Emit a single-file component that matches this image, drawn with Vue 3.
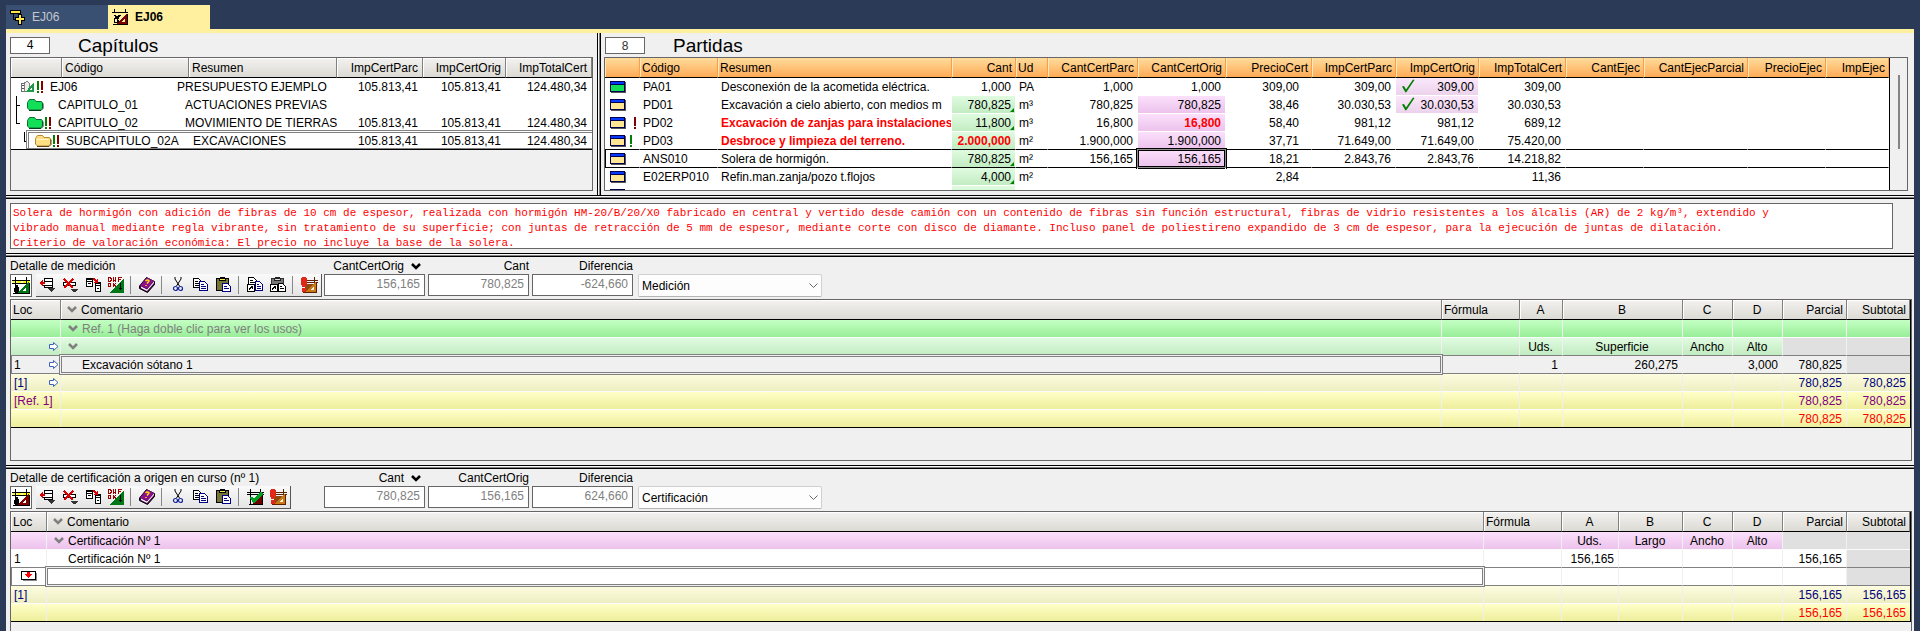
<script setup>
import { ref } from 'vue'

const chapters = [
  { code: 'EJ06', text: 'PRESUPUESTO EJEMPLO', icon: 'budget', marks: true, depth: 0, v: ['105.813,41', '105.813,41', '124.480,34'] },
  { code: 'CAPITULO_01', text: 'ACTUACIONES PREVIAS', icon: 'folder-green', depth: 1, v: ['', '', ''] },
  { code: 'CAPITULO_02', text: 'MOVIMIENTO DE TIERRAS', icon: 'folder-green', marks: true, depth: 1, v: ['105.813,41', '105.813,41', '124.480,34'] },
  { code: 'SUBCAPITULO_02A', text: 'EXCAVACIONES', icon: 'folder-yellow', marks: true, depth: 2, v: ['105.813,41', '105.813,41', '124.480,34'] },
]

const itemHeads = ['Cant', 'Ud', 'CantCertParc', 'CantCertOrig', 'PrecioCert', 'ImpCertParc', 'ImpCertOrig', 'ImpTotalCert', 'CantEjec', 'CantEjecParcial', 'PrecioEjec', 'ImpEjec']

const items = [
  { icon: 'item-green', code: 'PA01', text: 'Desconexión de la acometida eléctrica.', cant: '1,000', ud: 'PA', ccp: '1,000', cco: '1,000', price: '309,00', icp: '309,00', ico: '309,00', check: true, itc: '309,00' },
  { icon: 'item-yellow', code: 'PD01', text: 'Excavación a cielo abierto, con medios m', cant: '780,825', calc: true, ud: 'm³', ccp: '780,825', cco: '780,825', pink: true, price: '38,46', icp: '30.030,53', ico: '30.030,53', check: true, itc: '30.030,53' },
  { icon: 'item-yellow', mark: 'red', code: 'PD02', text: 'Excavación de zanjas para instalaciones', alert: true, cant: '11,800', calc: true, ud: 'm³', ccp: '16,800', cco: '16,800', ccoAlert: true, pink: true, price: '58,40', icp: '981,12', ico: '981,12', itc: '689,12' },
  { icon: 'item-yellow', mark: 'green', code: 'PD03', text: 'Desbroce y limpieza del terreno.', alert: true, cant: '2.000,000', green: true, cantAlert: true, ud: 'm²', ccp: '1.900,000', cco: '1.900,000', pink: true, price: '37,71', icp: '71.649,00', ico: '71.649,00', itc: '75.420,00' },
  { icon: 'item-yellow', code: 'ANS010', text: 'Solera de hormigón.', current: true, cant: '780,825', calc: true, ud: 'm²', ccp: '156,165', cco: '156,165', pink: true, price: '18,21', icp: '2.843,76', ico: '2.843,76', itc: '14.218,82' },
  { icon: 'item-yellow', code: 'E02ERP010', text: 'Refin.man.zanja/pozo t.flojos', cant: '4,000', calc: true, ud: 'm²', ccp: '', cco: '', price: '2,84', icp: '', ico: '', itc: '11,36' },
  { icon: 'item-yellow', code: '', text: '', cant: '', calc: true, ud: '', ccp: '', cco: '', price: '', icp: '', ico: '', itc: '' },
]

const description = ref(
  [
    'Solera de hormigón con adición de fibras de 10 cm de espesor, realizada con hormigón HM-20/B/20/X0 fabricado en central y vertido desde camión con un contenido de fibras sin función estructural, fibras de vidrio resistentes a los álcalis (AR) de 2 kg/m³, extendido y',
    'vibrado manual mediante regla vibrante, sin tratamiento de su superficie; con juntas de retracción de 5 mm de espesor, mediante corte con disco de diamante. Incluso panel de poliestireno expandido de 3 cm de espesor, para la ejecución de juntas de dilatación.',
    'Criterio de valoración económica: El precio no incluye la base de la solera.',
  ].join('\n')
)

const baseTools = [
  ['insert-row', 'Insertar línea'], ['delete-row', 'Eliminar línea'], ['transfer', 'Transferir líneas'], ['dwg', 'DWG/DXF'], null,
  ['book', 'Ayuda'], null,
  ['cut', 'Cortar'], ['copy', 'Copiar'], ['paste', 'Pegar'], null,
]

const details = [
  {
    id: 'med', title: 'Detalle de medición', mode: 'Medición', tone: 'green',
    tools: [...baseTools, ['copy-link', 'Copiar referencia'], ['paste-link', 'Pegar referencia'], null, ['measure-alert', 'Comprobar medición']],
    fields: [['CantCertOrig', '156,165'], ['Cant', '780,825'], ['Diferencia', '-624,660']],
    rows: [
      { kind: 'title', chev: true, text: 'Ref. 1 (Haga doble clic para ver los usos)', c: ['', '', '', '', '', '', ''] },
      { kind: 'labels', arrow: true, chev: true, text: '', c: ['', 'Uds.', 'Superficie', 'Ancho', 'Alto', '', ''] },
      { kind: 'current', loc: '1', arrow: true, text: 'Excavación sótano 1', c: ['', '1', '260,275', '', '3,000', '780,825', ''] },
      { kind: 'sum navy', loc: '[1]', arrow: true, text: '', c: ['', '', '', '', '', '780,825', '780,825'] },
      { kind: 'total purple', loc: '[Ref. 1]', text: '', c: ['', '', '', '', '', '780,825', '780,825'] },
      { kind: 'total red', text: '', c: ['', '', '', '', '', '780,825', '780,825'] },
    ],
  },
  {
    id: 'cert', title: 'Detalle de certificación a origen en curso (nº 1)', mode: 'Certificación', tone: 'pink',
    tools: [...baseTools, ['measure-ok', 'Certificar'], ['measure-alert', 'Comprobar certificación']],
    fields: [['Cant', '780,825'], ['CantCertOrig', '156,165'], ['Diferencia', '624,660']],
    rows: [
      { kind: 'labels', chev: true, text: 'Certificación Nº 1', c: ['', 'Uds.', 'Largo', 'Ancho', 'Alto', '', ''] },
      { kind: 'line', loc: '1', text: 'Certificación Nº 1', c: ['', '156,165', '', '', '', '156,165', ''] },
      { kind: 'current blank', entry: true, text: '', c: ['', '', '', '', '', '', ''] },
      { kind: 'sum navy', loc: '[1]', text: '', c: ['', '', '', '', '', '156,165', '156,165'] },
      { kind: 'total red', text: '', c: ['', '', '', '', '', '156,165', '156,165'] },
    ],
  },
]
</script>

<template>
  <div class="app">
    <svg class="defs" aria-hidden="true">
      <defs>
        <symbol id="measure" viewBox="0 0 18 17" shape-rendering="crispEdges">
          <path d="M0 3h18v1h-18zM0 6h18v1h-18z" fill="#000" />
          <path d="M1 4h2v2h-2zM5 4h4v2h-4zM11 4h3v2h-3zM15 4h3v2h-3z" fill="#ff0" />
          <path d="M3 0h1v17h-1zM14 0h1v7h-1z" fill="#000" />
          <path d="M17 5v11h-12z" fill="currentColor" />
          <path d="M14 11v3h-4z" fill="#fff" />
          <path d="M1 16h17v1h-17zM17 7h1v9h-1z" fill="#000" />
          <path d="M4 8h2v2h1v5h-1v1h-3v-1h-1v-4h2z" fill="#000" />
        </symbol>
        <symbol id="measure-tab" viewBox="0 0 16 16" shape-rendering="crispEdges">
          <path d="M0 3h16v1h-16zM2 0h1v4h-1zM13 0h1v4h-1z" fill="#000" />
          <path d="M15 4v11h-11z" fill="#800000" />
          <path d="M1 15h15v1h-15zM15 5h1v10h-1z" fill="#000" />
          <path d="M13 9v4h-4z" fill="#fff0a0" />
          <path d="M2 6h2v1h2v-1h3v1h-1v1h-1v2h-1v1h1v3h-5v-5h1v-2h-1z" fill="#000" />
          <path d="M3 10h2v3h-2z" fill="#fff0a0" />
        </symbol>
        <symbol id="plus-tab" viewBox="0 0 15 15" shape-rendering="crispEdges">
          <path d="M0 0h11v4h-11z" fill="#000" /><path d="M1 1h9v2h-9z" fill="#ffe84a" />
          <path d="M3 4h1v5h2v1h-3z" fill="#000" />
          <path d="M8 4h4v3h3v4h-3v4h-4v-4h-3v-4h3z" fill="#000" />
          <path d="M9 5h2v3h3v2h-3v4h-2v-4h-3v-2h3z" fill="#ffe84a" />
        </symbol>
        <symbol id="budget" viewBox="0 0 17 13" shape-rendering="crispEdges">
          <path d="M1.500 2.500h6v9h-6z" fill="#fff" stroke="#666" />
          <path d="M2 4h3v1h-3zM2 6h3v1h-3zM2 8h3v1h-3z" fill="#555" />
          <path d="M5.500 1.500l3 -1 2 2v9h-5z" fill="#eee" stroke="#777" />
          <path d="M16 1v11h-10z" fill="#1f9a48" /><path d="M13 7v3h-3z" fill="#fff" />
        </symbol>
        <symbol id="folder-green" viewBox="0 0 17 12">
          <path d="M.5 3.500l2-3h5l1.500 2h5.500l1 1.500v5l-2 2h-11l-2-2z" fill="#12df57" stroke="#087034" />
          <path d="M2 11.500h12l2-2v-5" fill="none" stroke="#044020" />
        </symbol>
        <symbol id="folder-yellow" viewBox="0 0 17 12">
          <path d="M.5 3.500l2-3h5l1.500 2h5.500l1 1.500v5l-2 2h-11l-2-2z" fill="#ffdf83" stroke="#b8862c" />
          <path d="M2 4.500h11" stroke="#fff3c4" /><path d="M2 11.500h12l2-2v-5" fill="none" stroke="#5d3e0c" />
        </symbol>
        <symbol id="marks" viewBox="0 0 7 12" shape-rendering="crispEdges">
          <path d="M0 0h2v9h-2zM0 10h2v2h-2z" fill="#007f00" /><path d="M4 0h2v9h-2zM4 10h2v2h-2z" fill="#800000" />
        </symbol>
        <symbol id="mark" viewBox="0 0 2 12" shape-rendering="crispEdges"><path d="M0 0h2v9h-2zM0 10h2v2h-2z" fill="currentColor" /></symbol>
        <symbol id="item-green" viewBox="0 0 16 12" shape-rendering="crispEdges">
          <path d="M1 1h15v11h-15z" fill="#555" /><path d="M0 0h15v11h-15z" fill="#000050" /><path d="M1 1h13v2h-13z" fill="#0838ff" /><path d="M1 4h13v6h-13z" fill="#12df57" />
        </symbol>
        <symbol id="item-yellow" viewBox="0 0 16 12" shape-rendering="crispEdges">
          <path d="M1 1h15v11h-15z" fill="#555" /><path d="M0 0h15v11h-15z" fill="#000050" /><path d="M1 1h13v2h-13z" fill="#0838ff" /><path d="M1 4h13v6h-13z" fill="#ffe692" />
        </symbol>
        <symbol id="check" viewBox="0 0 14 14"><path d="M1 7.500l2-.5 2 3.500 7-10 1.500.5-8 12-1 .5z" fill="#008000" /></symbol>
        <symbol id="chev" viewBox="0 0 10 7"><path d="M1 1l4 4 4-4" fill="none" stroke="currentColor" stroke-width="2.500" /></symbol>
        <symbol id="arrow" viewBox="0 0 10 9"><path d="M.5 2.500h4v-2l4.500 4-4.500 4v-2h-4z" fill="#fff" stroke="#3b62b8" /></symbol>
        <symbol id="entry" viewBox="0 0 17 12" shape-rendering="crispEdges">
          <path d="M2 3h14v8h-14z" fill="#888" /><path d="M0 1h15v9h-15z" fill="#000" /><path d="M1 2h13v7h-13z" fill="#fff" />
          <path d="M6 2h3v2h2v1h-1v1h-1v1h-1v1h-1v-1h-1v-1h-1v-1h-1v-1h2z" fill="#f00" />
        </symbol>
        <symbol id="insert-row" viewBox="0 0 17 16" shape-rendering="crispEdges">
          <path d="M5 1h9v1h-9zM5 1h1v3h-1zM13 1h1v3h-1zM5 4h9v1h-9zM3 8h11v1h-11zM13 5h1v3h-1z" fill="#000" />
          <path d="M6 2h7v2h-7zM4 5h9v3h-9z" fill="#fff" />
          <path d="M5 8h1v3h-1zM13 8h1v3h-1zM5 10h9v1h-9z" fill="#000" />
          <path d="M0 6h1v-1h1v-1h1v-1h1v2h2v2h-2v2h-1v-1h-1v-1h-1v-1h-1z" fill="#d80000" />
          <path d="M9 11h7v1h-1v1h-1v1h-1v1h-1v-1h-1v-1h-1v-1h-1z" fill="#333" />
        </symbol>
        <symbol id="delete-row" viewBox="0 0 17 16" shape-rendering="crispEdges">
          <path d="M1 5h13v1h-13zM1 8h13v1h-13zM1 5h1v4h-1zM13 5h1v4h-1z" fill="#000" /><path d="M2 6h11v2h-11z" fill="#fff" />
          <path d="M2 2l9 9M11 2l-9 9" stroke="#d80000" stroke-width="2" />
          <path d="M9 12h7v1h-1v1h-1v1h-3v-1h-1v-1h-1z" fill="#333" />
        </symbol>
        <symbol id="transfer" viewBox="0 0 17 16" shape-rendering="crispEdges">
          <path d="M1 1h7v9h-7z" fill="#000" /><path d="M2 3h5v1h-5zM2 5h5v4h-5z" fill="#fff" />
          <path d="M10 5h6v10h-6z" fill="#000" /><path d="M11 7h4v1h-4zM11 9h4v5h-4z" fill="#fff" />
          <path d="M8 1h2v1h1v1h1v-1h1v4h-4v-1h1v-1h-1v-1h-1z" fill="#d80000" />
          <path d="M3 6h3v1h-3zM12 11h2v1h-2z" fill="#000" />
        </symbol>
        <symbol id="dwg" viewBox="0 0 17 16" shape-rendering="crispEdges">
          <path d="M16 1v15h-15z" fill="#007818" />
          <path d="M.5 .5h2v1h1v2h-1v1h-2zM5.500 0v4.500l1-1 1 1v-4.500M10.500 4.500v-4h3M10.500 2.500h2M.5 6.500h2v3h-2zM5 6l3 4M8 6l-3 4" fill="none" stroke="#a00000" />
          <path d="M12 6h1v5h1v1h-1v1h-1v-1h-1v-1h1z" fill="#000" />
        </symbol>
        <symbol id="book" viewBox="0 0 17 16">
          <path d="M.5 9l7-8.500 8 4v3l-7 8-8-4z" fill="#4d0050" stroke="#000" />
          <path d="M1 8.500l7-8 7 3.500-7 7.500z" fill="#8b1090" />
          <path d="M2 11l6 3 7-8v-1.500l-7 8-6-3z" fill="#fff" />
          <path d="M6.500 4q2-2 3.500 0l-2 2.500M7 8v1" stroke="#ffe000" stroke-width="1.500" fill="none" />
        </symbol>
        <symbol id="cut" viewBox="-3 0 17 16">
          <path d="M2 0v2l4.500 7M8 0v2l-4.500 7" stroke="#000" fill="none" />
          <circle cx="2.500" cy="11.500" r="2" fill="none" stroke="#1424a0" stroke-width="1.200" /><circle cx="7.500" cy="11.500" r="2" fill="none" stroke="#1424a0" stroke-width="1.200" />
        </symbol>
        <symbol id="copy" viewBox="0 -1 17 16" shape-rendering="crispEdges">
          <path d="M.5 .5h5l3 3v6h-8z" fill="#fff" stroke="#000" /><path d="M2 3h3v1h-3zM2 5h5v1h-5zM2 7h5v1h-5z" fill="#000" />
          <path d="M6.500 3.500h5l3 3v6h-8z" fill="#fff" stroke="#000080" /><path d="M8 6h3v1h-3zM8 8h5v1h-5zM8 10h5v1h-5z" fill="#000080" />
        </symbol>
        <symbol id="paste" viewBox="0 0 17 16" shape-rendering="crispEdges">
          <path d="M.5 1.500h12v12h-12z" fill="#77743a" stroke="#000" /><path d="M4 0h5v1h1v3h-7v-3h1z" fill="#000" /><path d="M4 2h5v1h-5z" fill="#ffe94a" />
          <path d="M6.500 6.500h5l3 3v5h-8z" fill="#fff" stroke="#000080" /><path d="M8 9h3v1h-3zM8 11h5v1h-5z" fill="#000080" />
        </symbol>
        <symbol id="copy-link" viewBox="0 0 17 16" shape-rendering="crispEdges">
          <path d="M1.500 .5h5l3 3v7h-8z" fill="#fff" stroke="#000" /><path d="M3 3h3v1h-3zM3 5h5v1h-5z" fill="#000" />
          <path d="M8.500 4.500h4l3 3v6h-7z" fill="#fff" stroke="#000080" /><path d="M10 7h2v1h-2zM10 9h4v1h-4zM10 11h4v1h-4z" fill="#000080" />
          <path d="M.5 7.500h7v7h-7z" fill="#fff" stroke="#000" /><path d="M3 9h3v3h-1v-1h-1v1h-1v1h-1v-2h1v-1h1v-1z" fill="#000" />
        </symbol>
        <symbol id="paste-link" viewBox="0 0 17 16" shape-rendering="crispEdges">
          <path d="M1.500 1.500h12v11h-12z" fill="#777" stroke="#333" /><path d="M5 0h5v1h1v3h-7v-3h1z" fill="#222" /><path d="M5 2h5v1h-5z" fill="#ddd" />
          <path d="M8.500 6.500h4l3 3v5h-7z" fill="#fff" stroke="#000" /><path d="M10 9h2v1h-2zM10 11h4v1h-4z" fill="#000" />
          <path d="M.5 7.500h7v7h-7z" fill="#fff" stroke="#000" /><path d="M3 9h3v3h-1v-1h-1v1h-1v1h-1v-2h1v-1h1v-1z" fill="#000" />
        </symbol>
        <symbol id="measure-alert" viewBox="0 0 17 16" shape-rendering="crispEdges">
          <path d="M0 3h17v1h-17zM0 5h17v1h-17zM13 0h1v6h-1z" fill="#5a2000" />
          <path d="M4 7h11v8h-11z" fill="#8a4a10" />
          <path d="M15 5v10h-11z" fill="#c87818" /><path d="M13 9v4h-4z" fill="#fff0d0" />
          <path d="M2 15h14v1h-14zM15 6h1v9h-1z" fill="#5a2000" />
          <path d="M1 0h4v1h1v7h-1v2h-4v-2h-1v-7h1zM1 11h4v4h-4z" fill="#e02818" />
        </symbol>
        <symbol id="measure-ok" viewBox="0 0 17 16" shape-rendering="crispEdges">
          <path d="M0 3h17v1h-17zM0 5h17v1h-17zM3 0h1v15h-1zM13 0h1v6h-1z" fill="#000" />
          <path d="M15 5v10h-10z" fill="#700000" /><path d="M2 15h14v1h-14zM15 6h1v9h-1z" fill="#000" />
          <path d="M4 8l3 4 8-8" fill="none" stroke="#00a020" stroke-width="3" />
        </symbol>
      </defs>
    </svg>

    <nav class="tabs" aria-label="Documentos">
      <button type="button" class="tab"><svg width="15" height="15"><use href="#plus-tab" /></svg>EJ06</button>
      <button type="button" class="tab active"><svg width="16" height="16"><use href="#measure-tab" /></svg>EJ06</button>
    </nav>

    <main class="work">
      <div class="top">
        <section class="pane">
          <header class="pane-head">
            <output class="count">4</output>
            <h2>Capítulos</h2>
          </header>
          <div class="box">
            <table class="chapters">
              <colgroup><col class="w51" /><col class="w127" /><col /><col class="w86" /><col class="w83" /><col class="w86" /></colgroup>
              <thead>
                <tr><th></th><th>Código</th><th>Resumen</th><th class="r">ImpCertParc</th><th class="r">ImpCertOrig</th><th class="r">ImpTotalCert</th></tr>
              </thead>
              <tbody>
                <tr v-for="(row, i) in chapters" :key="row.code" :class="{ selected: i === chapters.length - 1 }">
                  <td colspan="3">
                    <div class="node" :class="'d' + row.depth">
                      <span v-if="row.depth" class="branch" :class="{ through: i === 1 }"></span>
                      <span class="node-icon">
                        <svg width="17" height="12"><use :href="'#' + row.icon" /></svg>
                        <svg v-if="row.marks" width="7" height="12"><use href="#marks" /></svg>
                      </span>
                      <span class="node-code">{{ row.code }}</span>
                      <span>{{ row.text }}</span>
                    </div>
                  </td>
                  <td v-for="(v, k) in row.v" :key="k" class="r">{{ v }}</td>
                </tr>
              </tbody>
            </table>
          </div>
        </section>

        <div class="split-v"></div>

        <section class="pane right">
          <header class="pane-head">
            <output class="count plain">8</output>
            <h2>Partidas</h2>
          </header>
          <div class="box with-scroll">
            <div class="clip">
              <table class="items">
                <colgroup>
                  <col class="w35" /><col class="w78" /><col /><col class="w64" /><col class="w32" /><col class="w90" /><col class="w88" /><col class="w86" /><col class="w84" /><col class="w83" /><col class="w87" /><col class="w78" /><col class="w104" /><col class="w78" /><col class="w63" />
                </colgroup>
                <thead>
                  <tr>
                    <th></th><th>Código</th><th>Resumen</th>
                    <th v-for="h in itemHeads" :key="h" :class="{ r: h !== 'Ud' }">{{ h }}</th>
                  </tr>
                </thead>
                <tbody>
                  <tr v-for="(it, i) in items" :key="i" :class="{ current: it.current }">
                    <td class="item-icon">
                      <svg width="16" height="12"><use :href="'#' + it.icon" /></svg>
                      <svg v-if="it.mark" class="mark" :class="it.mark" width="2" height="12"><use href="#mark" /></svg>
                    </td>
                    <td>{{ it.code }}</td>
                    <td class="summary" :class="{ alert: it.alert }">{{ it.text }}</td>
                    <td class="r" :class="{ green: it.calc || it.green, calc: it.calc, alert: it.cantAlert }">{{ it.cant }}</td>
                    <td>{{ it.ud }}</td>
                    <td class="r">{{ it.ccp }}</td>
                    <td class="r" :class="{ pink: it.pink, alert: it.ccoAlert, focus: it.current }">{{ it.cco }}</td>
                    <td class="r price">{{ it.price }}</td>
                    <td class="r">{{ it.icp }}</td>
                    <td class="r" :class="{ lilac: it.check }"><svg v-if="it.check" class="check" width="14" height="14"><use href="#check" /></svg>{{ it.ico }}</td>
                    <td class="r">{{ it.itc }}</td>
                    <td></td><td></td><td></td><td></td>
                  </tr>
                </tbody>
              </table>
            </div>
            <div class="scroll"><span></span></div>
          </div>
        </section>
      </div>

      <div class="split-h"></div>

      <div class="memo">
        <textarea v-model="description" aria-label="Texto descriptivo" spellcheck="false"></textarea>
      </div>

      <template v-for="d in details" :key="d.id">
        <div class="split-h"></div>
        <section class="detail" :class="d.tone">
          <div class="bar">
            <div class="bar-left">
              <h3>{{ d.title }}</h3>
              <div class="tools">
                <button type="button" class="pressed" :aria-label="d.mode"><svg width="18" height="17"><use href="#measure" /></svg></button>
                <div class="strip">
                  <template v-for="(t, i) in d.tools" :key="i">
                    <button v-if="t" type="button" :aria-label="t[1]"><svg width="17" height="16"><use :href="'#' + t[0]" /></svg></button>
                    <span v-else class="sep"></span>
                  </template>
                </div>
              </div>
            </div>
            <div v-for="(f, i) in d.fields" :key="f[0]" class="field">
              <label :for="d.id + i">{{ f[0] }}<svg v-if="i === 0" width="10" height="7"><use href="#chev" /></svg></label>
              <input :id="d.id + i" type="text" :value="f[1]" readonly />
            </div>
            <div class="combo">
              <select :aria-label="d.title"><option>{{ d.mode }}</option></select>
              <svg width="9" height="6" viewBox="0 0 9 6"><path d="M.5 .5l4 4 4-4" fill="none" stroke="#666" /></svg>
            </div>
          </div>
          <div class="box">
            <table class="lines">
              <colgroup><col class="c-loc" /><col /><col class="w78" /><col class="c-a" /><col class="c-b" /><col class="w50" /><col class="w50" /><col class="w64" /><col class="w63" /></colgroup>
              <thead>
                <tr>
                  <th>Loc</th>
                  <th class="comment"><svg class="chev" width="10" height="7"><use href="#chev" /></svg>Comentario</th>
                  <th>Fórmula</th><th class="c">A</th><th class="c">B</th><th class="c">C</th><th class="c">D</th><th class="r">Parcial</th><th class="r">Subtotal</th>
                </tr>
              </thead>
              <tbody>
                <tr v-for="(r, i) in d.rows" :key="i" :class="r.kind">
                  <td class="loc">
                    {{ r.loc }}
                    <svg v-if="r.arrow" class="arrow" width="10" height="9"><use href="#arrow" /></svg>
                    <svg v-if="r.entry" class="entry" width="17" height="12"><use href="#entry" /></svg>
                  </td>
                  <td class="comment"><svg v-if="r.chev" class="chev" width="10" height="7"><use href="#chev" /></svg>{{ r.text }}</td>
                  <td v-for="(v, k) in r.c" :key="k" class="num">{{ v }}</td>
                </tr>
              </tbody>
            </table>
          </div>
        </section>
      </template>
    </main>
  </div>
</template>

<style>
body { margin: 0; background: #2b3a56; }
</style>

<style scoped>
* { box-sizing: border-box; }
.defs { position: absolute; width: 0; height: 0; }
svg { flex: none; }
.app {
  height: 100vh;
  display: flex;
  flex-direction: column;
  padding: 5px 6px 0;
  background: #2b3a56;
  color: #000;
  font: 12px/17px "Liberation Sans", Arial, sans-serif;
  overflow: hidden;
}
button, input, select { font: inherit; }

.tabs { display: flex; border-bottom: 4px solid #fff0a0; }
.tab {
  width: 102px;
  height: 24px;
  display: flex;
  align-items: center;
  gap: 7px;
  padding: 0 4px;
  border: 0;
  background: #3a5072;
  color: #c4c8ce;
}
.tab.active { background: #fff0a0; color: #000; font-weight: bold; }

.work {
  flex: 1;
  min-height: 0;
  display: grid;
  grid-template-rows: minmax(0, 162fr) 4px minmax(0, 54fr) 4px minmax(0, 208fr) 4px minmax(0, 162fr);
  background: #f0f0f0;
}
.split-h { background: linear-gradient(#000 1px, #f8f8f8 1px 2px, #808080 2px 3px, #000 3px); }
.split-v { background: linear-gradient(90deg, #000 1px, #f8f8f8 1px 2px, #808080 2px 3px, #000 3px); }
.top { display: grid; grid-template-columns: minmax(0, 591fr) 4px minmax(0, 1313fr); }

.pane { display: flex; flex-direction: column; padding: 4px; min-height: 0; }
.pane.right { padding: 4px 6px 4px 3px; }
.pane-head { display: flex; height: 20px; gap: 28px; }
.right .pane-head { padding-left: 1px; }
.count { width: 40px; height: 17px; border: 1px solid #666; background: #fff; text-align: center; line-height: 16px; font-family: "Liberation Mono", monospace; }
.count.plain { font-family: inherit; color: #333; }
h2 { margin: 0; font-size: 19px; line-height: 17px; font-weight: normal; }

.box { flex: 1; min-height: 0; border: 1px solid #666; overflow: hidden; position: relative; }
.with-scroll { display: flex; }
.clip { flex: 1; min-width: 0; overflow: hidden; background: #fff; }
.scroll { width: 17px; padding: 17px 0 0 8px; }
.scroll span { display: block; width: 2px; height: 74px; background: #858585; }

table { width: 100%; table-layout: fixed; border-collapse: separate; border-spacing: 0; }
th, td { white-space: nowrap; overflow: hidden; position: relative; text-align: left; font-weight: normal; }
td { height: 18px; padding: 1px 4px 0 3px; line-height: 16px; }
th {
  height: 20px;
  padding: 1px 3px 0 2px;
  border-right: 1px solid #808080;
  border-bottom: 1px solid #000;
  background: linear-gradient(#f3f2f0, #dbdad4);
  box-shadow: inset 1px 1px 0 #fff;
}
.r { text-align: right; }
.c { text-align: center; }

.w32 { width: 32px; } .w35 { width: 35px; } .w50 { width: 50px; } .w51 { width: 51px; }
.w63 { width: 63px; } .w64 { width: 64px; } .w78 { width: 78px; } .w83 { width: 83px; }
.w84 { width: 84px; } .w86 { width: 86px; } .w87 { width: 87px; } .w88 { width: 88px; }
.w90 { width: 90px; } .w104 { width: 104px; } .w127 { width: 127px; }

.chapters { border-bottom: 1px solid #000; }
.chapters td { background: #fff; overflow: visible; padding: 0 5px 0 0; }
.chapters .selected td { height: 17px; }
.chapters th:not(:first-child) { padding-left: 3px; padding-right: 4px; }
.node { display: flex; align-items: center; position: relative; }
.node > span { flex: none; }
.node.d0 { padding-left: 8px; }
.node.d1 { padding-left: 16px; }
.node.d2 { padding-left: 24px; }
.node-icon { width: 31px; display: flex; gap: 1px; }
.node-code { width: 127px; }
.branch { position: absolute; left: 5px; top: -1px; width: 4px; height: 10px; border-left: 1px solid #000; border-bottom: 1px solid #000; }
.d2 .branch { left: 13px; width: 2px; }
.branch.through::after { content: ""; position: absolute; left: -1px; top: 8px; height: 10px; border-left: 1px solid #000; }
.selected td::after { content: ""; position: absolute; inset: -2px 0 0 0; border-top: 3px double #808080; border-bottom: 1px solid #808080; }
.selected td:first-child::after { left: 15px; border-left: 3px double #808080; }

.items { border-right: 1px solid #000; }
.items th { background: linear-gradient(#ffdc9c, #ffab56); border-right-color: #ff9d45; box-shadow: inset 1px 0 0 #ffe9b8; }
.items td { border-bottom: 1px solid #fff; border-right: 1px solid #fff; background-clip: padding-box; }
.items tr.current td { border-bottom-color: #000; overflow: visible; }
.items tr:has(+ .current) td { border-bottom-color: #000; }
.items tr.current td:first-child { box-shadow: inset 1px 0 0 #000; }
.items td.item-icon { padding: 0 0 0 5px; line-height: 0; }
.mark { position: absolute; left: 29px; top: 3px; }
.mark.red { color: #800000; }
.mark.green { left: 25px; color: #008000; }
.items td.summary { padding-right: 0; }
.alert { color: #f00; font-weight: bold; }
.items td.price { padding-right: 12px; }
td.green { background-image: linear-gradient(#e0fbe0, #c2ecc2); }
td.calc::after { content: ""; position: absolute; right: 1px; bottom: 1px; border: 2px solid #008000; border-top-color: transparent; border-left-color: transparent; }
td.pink { background-image: linear-gradient(#fbe0fb, #ecc2ec); }
td.lilac { background-image: linear-gradient(#fbe8fb, #ecd2ec); }
td.focus::after { content: ""; position: absolute; inset: -2px; border: 1px solid #000; box-shadow: inset 0 0 0 1px #909090, inset 0 0 0 2px #000; }
.check { position: absolute; left: 5px; top: 1px; }

.memo { padding: 4px 21px 4px 4px; }
textarea {
  display: block;
  width: 100%;
  height: 100%;
  padding: 2px;
  border: 1px solid #666;
  border-radius: 0;
  background: #fff;
  color: #f00;
  font: 11px/15px "Liberation Mono", "Courier New", monospace;
  resize: none;
  overflow: hidden;
  outline: none;
}

.detail { display: flex; flex-direction: column; padding: 0 2px 4px 4px; min-height: 0; }
.detail.pink { padding-bottom: 0; }
.pink .box { border-bottom: 0; }
.bar { display: flex; gap: 3px; margin-bottom: 2px; flex: none; }
.bar-left { width: 311px; }
h3 { margin: 0; padding-top: 1px; font: inherit; line-height: 16px; white-space: nowrap; }
.tools { display: flex; gap: 4px; width: max-content; }
.tools button { width: 23px; height: 22px; padding: 0; border: 0; background: none; display: flex; align-items: center; justify-content: center; }
.tools .pressed { width: 22px; height: 23px; border: 1px solid #666; background: #fff; color: #007818; }
.pink .pressed { color: #800000; }
.strip { display: flex; height: 23px; background: linear-gradient(#fafafa, #e4e4e4); border-right: 1px solid #555; border-bottom: 1px solid #555; }
.sep { width: 8px; position: relative; }
.sep::after { content: ""; position: absolute; left: 2px; top: 2px; bottom: 2px; width: 1px; background: #888; }
.field { width: 101px; display: flex; flex-direction: column; }
.field label { display: flex; align-items: center; justify-content: flex-end; gap: 7px; padding-top: 1px; line-height: 16px; }
.field label svg { margin-right: 4px; }
.field input { width: 100%; height: 22px; border: 1px solid #666; border-radius: 0; background: #fff; color: #808080; text-align: right; padding: 0 4px 3px; outline: none; }
.combo { position: relative; width: 184px; margin: 17px 0 0 2px; }
.combo select { width: 100%; height: 23px; appearance: none; border: 1px solid #d0d0d0; border-bottom-color: #b4b4b4; border-radius: 2px; background: #fdfdfd; color: #000; padding: 1px 3px 0; outline: none; }
.combo svg { position: absolute; right: 4px; top: 9px; pointer-events: none; }

.lines { border-bottom: 1px solid #000; border-right: 1px solid #000; }
.lines th.comment { padding-left: 20px; }
.c-loc { width: 50px; }
.c-a { width: 43px; }
.c-b { width: 120px; }
.pink .c-loc { width: 36px; }
.pink .c-a { width: 57px; }
.pink .c-b { width: 64px; }
.lines td { border-right: 1px solid #f0f0f0; border-bottom: 1px solid #fbfbfb; background-color: #fff; }
.lines td:last-child { border-right: 0; }
.lines tr:last-child td { border-bottom: 0; height: 17px; }
.lines td.comment { padding-left: 21px; }
.lines .chev { position: absolute; left: 7px; top: 5px; color: #808080; }
.lines th .chev { left: 6px; top: 6px; }
.arrow { position: absolute; left: 38px; top: 4px; }
.entry { position: absolute; left: 10px; top: 2px; }
.num { text-align: right; }
.title td { background: linear-gradient(#c4ffc4, #98ee98); color: #808080; }
.labels .num { text-align: center; }
.green .labels td { background: linear-gradient(#e0fbe0, #c2ecc2); }
.pink .labels td { background: linear-gradient(#fbe0fb, #ecc2ec); }
.green .labels td:nth-last-child(-n + 2),
.pink .labels td:nth-last-child(-n + 2),
.line td:last-child { background: #e0e0e0; }
.lines .current td { background-color: #f0f0f0; border-bottom-color: #808080; overflow: visible; }
.lines .current.blank td { background-color: #fff; }
.lines .current td:last-child,
.lines .current.blank td:last-child { background-color: #e0e0e0; }
.lines tr:has(+ .current) td { border-bottom-color: #808080; }
.lines .current .loc { box-shadow: inset 1px 0 0 #808080, inset -1px 0 0 #808080; }
.lines .current .comment::after { content: ""; position: absolute; z-index: 1; inset: -2px; border: 1px solid #808080; box-shadow: inset 0 0 0 1px #f0f0f0, inset 0 0 0 2px #808080; }
.sum td { background: linear-gradient(#fdfde0, #eeeec2); }
.total td { background: linear-gradient(#ffffc8, #eeee9c); }
.navy { color: #000080; }
.purple { color: #800080; }
.red { color: #f00; }
</style>
